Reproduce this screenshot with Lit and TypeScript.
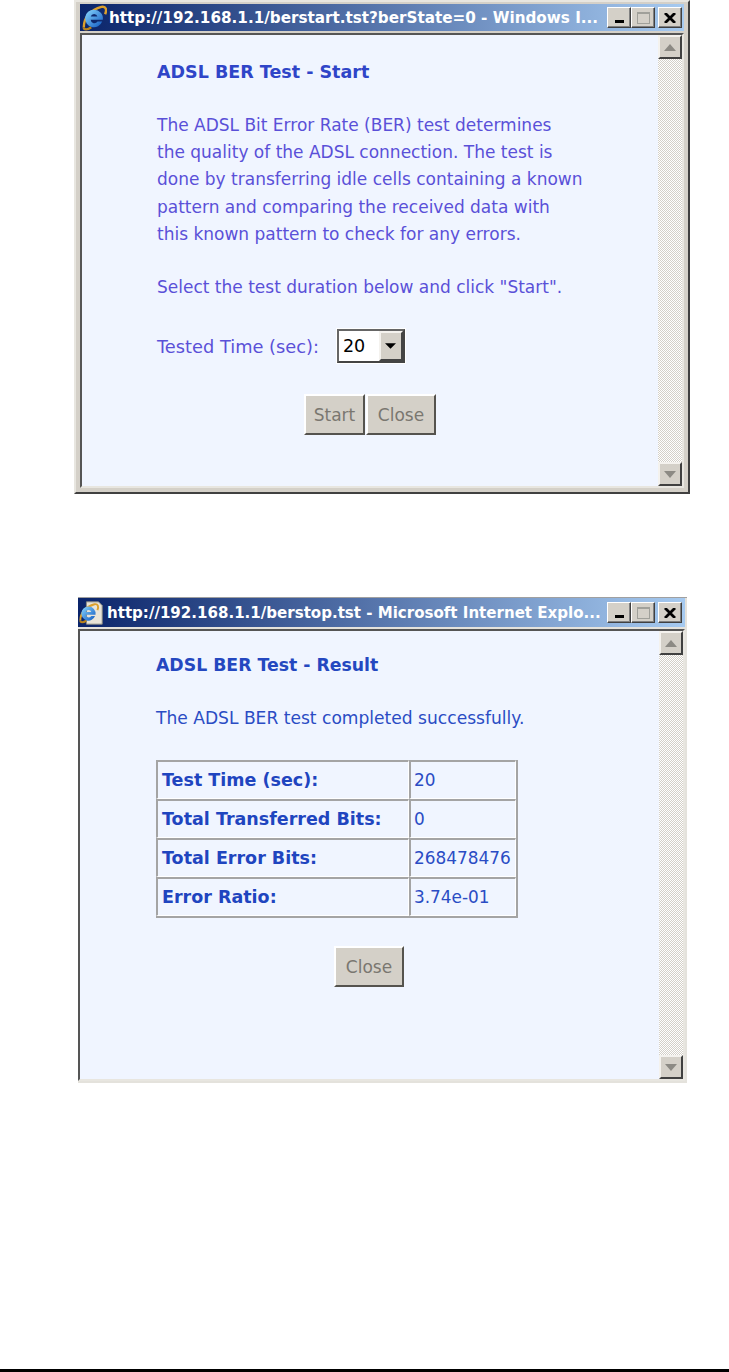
import { LitElement, html, css, svg } from "lit";
import { customElement, property } from "lit/decorators.js";

const UI_FONT = css`"DejaVu Sans", Verdana, sans-serif`;

const ieIcon = svg`
  <defs>
    <linearGradient id="ieblue" x1="0" y1="0" x2="1" y2="1">
      <stop offset="0" stop-color="#8ad8ff" />
      <stop offset="1" stop-color="#0f58c0" />
    </linearGradient>
  </defs>
  <path d="M3 24C3 13 11 5 22 2c5-1 6 3 4 8" fill="none" stroke="#dca02c" stroke-width="2.6" />
  <path d="M3 24c0 3 4 3 8 0" fill="none" stroke="#b8821c" stroke-width="2.6" />
  <path fill="url(#ieblue)" fill-rule="evenodd"
    d="M14 5a9.5 9.5 0 0 1 9.500 11H10.400a4 4 0 0 0 7.400 1.800h5A9.500 9.500 0 1 1 14 5zm-3.500 7.500h7.200a3.700 3.700 0 0 0-7.200 0z" />
`;

const pageIcon = svg`
  <path d="M8 2h13l4 4v20H8z" fill="#e8e4d8" stroke="#8a8a80" />
  <g transform="translate(-1 3) scale(.8)">${ieIcon}</g>
`;

@customElement("win-frame")
class WinFrame extends LitElement {
  @property() caption = "";
  @property() icon = "ie";

  render() {
    return html`
      <div class="frame">
        <div class="titlebar">
          <svg class="icon" viewBox="0 0 28 28">${this.icon === "ie" ? ieIcon : pageIcon}</svg>
          <span class="caption">${this.caption}</span>
          <div class="btn min"><i></i></div>
          <div class="btn max"><i></i></div>
          <div class="btn close">
            <svg viewBox="0 0 12 10"><path d="M1 0l10 10M11 0L1 10" stroke="#000" stroke-width="2.800" /></svg>
          </div>
        </div>
        <div class="client">
          <div class="content"><slot></slot></div>
          <div class="scrollbar">
            <div class="arrow"><svg viewBox="0 0 12 7"><path d="M6 0l6 7H0z" fill="#8c8a84" /></svg></div>
            <div class="track"></div>
            <div class="arrow"><svg viewBox="0 0 12 7"><path d="M0 0h12L6 7z" fill="#8c8a84" /></svg></div>
          </div>
        </div>
      </div>
    `;
  }

  static styles = css`
    :host {
      display: block;
    }
    .frame {
      box-sizing: border-box;
      height: 100%;
      display: flex;
      flex-direction: column;
      background: #d4d0c8;
      border-right: 2px solid #404040;
      border-bottom: 2px solid #404040;
      border-left: 2px solid #e8e6e0;
      border-top: 2px solid #e8e6e0;
      padding: 2px 4px 4px;
    }
    :host(.second) .frame {
      border: none;
      border-top: 1px solid #a0a0a0;
      background: #e4e2dc;
      padding: 0 2px 2px 0;
    }
    .titlebar {
      height: 27px;
      flex: none;
      display: flex;
      align-items: center;
      padding-right: 2px;
      background: linear-gradient(90deg, #0a246a, #a6caf0);
      color: #fff;
      font: bold 15.200px ${UI_FONT};
    }
    :host(.second) .titlebar {
      height: 29px;
      padding-right: 3px;
      font-size: 15.050px;
    }
    .icon {
      width: 26px;
      height: 26px;
      margin: 0 2px 0 1px;
      flex: none;
    }
    .caption {
      flex: 1;
      min-width: 0;
      white-space: nowrap;
      overflow: hidden;
    }
    .btn {
      box-sizing: border-box;
      width: 24px;
      height: 21px;
      flex: none;
      background: #d4d0c8;
      border: 1px solid;
      border-color: #fff #404040 #404040 #fff;
      box-shadow: inset -1px -1px 0 #808080;
      display: flex;
      align-items: center;
      justify-content: center;
    }
    .btn.max {
      margin-right: 3px;
    }
    .min i {
      width: 9px;
      height: 3px;
      background: #000;
      margin-top: 8px;
    }
    .max i {
      box-sizing: border-box;
      width: 13px;
      height: 12px;
      border: 1px solid #a0a09a;
      border-top-width: 2px;
    }
    .close svg {
      width: 12px;
      height: 10px;
    }
    .client {
      flex: 1;
      min-height: 0;
      margin-top: 2px;
      display: flex;
      background: #f0f5ff;
      border: 2px solid;
      border-color: #555 #e8e6e0 #e8e6e0 #555;
    }
    .content {
      flex: 1;
      min-width: 0;
    }
    .scrollbar {
      width: 24px;
      flex: none;
      display: flex;
      flex-direction: column;
    }
    .track {
      flex: 1;
      background: repeating-conic-gradient(#d4d0c8 0 25%, #fff 0 50%) 0 0 / 2px 2px;
    }
    .arrow {
      box-sizing: border-box;
      height: 24px;
      flex: none;
      background: #d4d0c8;
      border: 2px solid;
      border-color: #f4f2ee #404040 #404040 #f4f2ee;
      display: flex;
      align-items: center;
      justify-content: center;
    }
    .arrow svg {
      width: 12px;
      height: 7px;
    }
  `;
}

@customElement("app-root")
class AppRoot extends LitElement {
  render() {
    return html`
      <div class="page">
        <win-frame class="first" icon="ie" caption="http://192.168.1.1/berstart.tst?berState=0 - Windows I...">
          <div class="pane start">
            <div class="heading">ADSL BER Test - Start</div>
            <p class="para">
              The ADSL Bit Error Rate (BER) test determines<br />
              the quality of the ADSL connection. The test is<br />
              done by transferring idle cells containing a known<br />
              pattern and comparing the received data with<br />
              this known pattern to check for any errors.
            </p>
            <p class="para">Select the test duration below and click "Start".</p>
            <div class="field">
              <span class="field-label">Tested Time (sec):</span>
              <div class="select">
                <span class="value">20</span>
                <div class="drop"><svg viewBox="0 0 10 5"><path d="M0 0h10L5 5z" fill="#000" /></svg></div>
              </div>
            </div>
            <div class="actions">
              <div class="button start-btn">Start</div>
              <div class="button close-btn">Close</div>
            </div>
          </div>
        </win-frame>

        <win-frame class="second" icon="page" caption="http://192.168.1.1/berstop.tst - Microsoft Internet Explo...">
          <div class="pane result">
            <div class="heading">ADSL BER Test - Result</div>
            <p class="para">The ADSL BER test completed successfully.</p>
            <table>
              <tr><th>Test Time (sec):</th><td>20</td></tr>
              <tr><th>Total Transferred Bits:</th><td>0</td></tr>
              <tr><th>Total Error Bits:</th><td>268478476</td></tr>
              <tr><th>Error Ratio:</th><td>3.74e-01</td></tr>
            </table>
            <div class="actions single">
              <div class="button close-btn">Close</div>
            </div>
          </div>
        </win-frame>
        <div class="rule"></div>
      </div>
    `;
  }

  static styles = css`
    :host {
      display: block;
      font-family: ${UI_FONT};
    }
    .page {
      box-sizing: border-box;
      height: 1372px;
      background: #fff;
      display: flex;
      flex-direction: column;
      overflow: hidden;
    }
    win-frame.first {
      width: 616px;
      height: 494px;
      margin-left: 74px;
      flex: none;
    }
    win-frame.second {
      width: 609px;
      height: 486px;
      margin: 103px 0 0 78px;
      flex: none;
    }
    .rule {
      margin-top: auto;
      height: 3px;
      background: #000;
    }
    .pane {
      box-sizing: border-box;
      height: 100%;
      padding-left: 75px;
    }
    .start {
      color: #5a50d8;
      padding-top: 27px;
    }
    .result {
      color: #2a4cc4;
      padding-top: 24px;
      padding-left: 76px;
    }
    .heading {
      font-size: 17.500px;
      font-weight: bold;
      line-height: 20px;
      color: #2f45c8;
      white-space: nowrap;
    }
    .result .heading {
      font-size: 17.300px;
      color: #2448c0;
    }
    .para {
      margin: 0;
      font-size: 17px;
      line-height: 27.200px;
      white-space: nowrap;
    }
    .start .para {
      margin-top: 30px;
    }
    .start .para + .para {
      margin-top: 26px;
    }
    .result .para {
      margin-top: 30px;
      font-size: 17.100px;
    }
    .field {
      margin-top: 28px;
      display: flex;
      align-items: center;
      gap: 18px;
      font-size: 17.800px;
    }
    .field-label {
      padding-top: 1px;
    }
    .select {
      box-sizing: border-box;
      width: 68px;
      height: 34px;
      display: flex;
      align-items: center;
      background: #fff;
      border: 2px solid;
      border-color: #666 #444 #444 #666;
      outline: 1px solid #fff;
      color: #000;
      font-size: 17.500px;
    }
    .value {
      flex: 1;
      padding-left: 4px;
    }
    .drop {
      box-sizing: border-box;
      width: 24px;
      height: 100%;
      background: #d4d0c8;
      border: 2px solid;
      border-color: #f4f2ee #444 #444 #f4f2ee;
      display: flex;
      align-items: center;
      justify-content: center;
    }
    .drop svg {
      width: 11px;
      height: 6px;
    }
    .actions {
      margin-top: 31px;
      margin-left: 147px;
      display: flex;
      gap: 1px;
    }
    .single {
      margin-top: 28px;
      margin-left: 178px;
    }
    .button {
      box-sizing: border-box;
      height: 41px;
      display: flex;
      align-items: center;
      justify-content: center;
      background: #d4d0c8;
      color: #7a7770;
      font-size: 17px;
      border: 2px solid;
      border-color: #fff #55534e #55534e #fff;
    }
    .start-btn {
      width: 61px;
    }
    .close-btn {
      width: 70px;
    }
    table {
      margin-top: 28px;
      width: 362px;
      height: 158px;
      border-collapse: separate;
      border-spacing: 0;
      table-layout: fixed;
      font-size: 16.900px;
      border-right: 2px solid #a4a4a4;
      border-bottom: 2px solid #a4a4a4;
    }
    th,
    td {
      border-top: 2px solid #a4a4a4;
      border-left: 2px solid #a4a4a4;
      border-right: 1px solid #fff;
      border-bottom: 1px solid #fff;
      padding: 0 0 0 4px;
      text-align: left;
      white-space: nowrap;
    }
    td {
      padding-left: 3px;
    }
    th {
      width: 246px;
      font-size: 17.500px;
      color: #1f45bf;
    }
  `;
}
